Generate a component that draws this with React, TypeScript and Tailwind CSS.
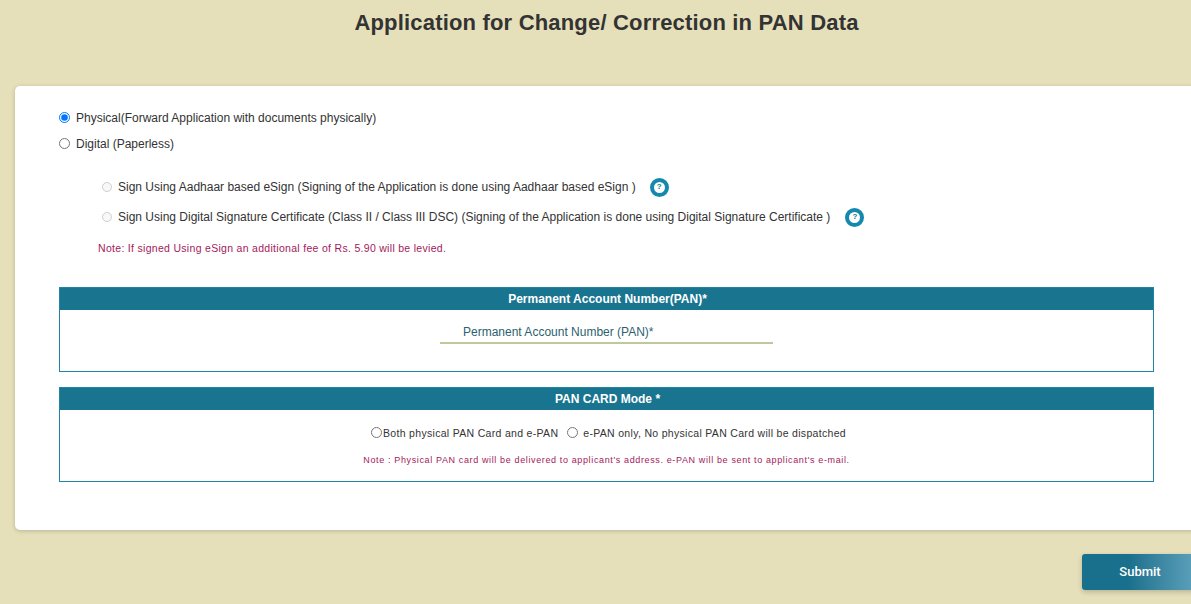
import { useState } from "react";

function HelpIcon({ className }: { className: string }) {
  return (
    <span className={`flex h-[19px] w-[19px] items-center justify-center rounded-full border-[4px] border-[#1489ad] bg-white text-[8px] font-bold leading-none text-[#17748f] ${className}`}>
      ?
    </span>
  );
}

function Section({ title, className, children }: { title: string; className: string; children: React.ReactNode }) {
  return (
    <div className={`p-[1px] shadow-[inset_0_0_0_1px_#1f84a6] ${className}`}>
      <div className="flex h-[22px] items-center justify-center bg-[#18748f] pl-[2px] text-[12px] font-bold text-white">
        {title}
      </div>
      {children}
    </div>
  );
}

export default function App() {
  const [mode, setMode] = useState("physical");
  const [cardMode, setCardMode] = useState("");

  return (
    <div className="h-[604px] w-[1191px] overflow-hidden bg-[#e5e0ba] font-['Liberation_Sans',Arial,sans-serif] text-[#333]">
      <div className="w-[1213px]">
        <h1 className="h-[86px] pt-[9px] text-center text-[22px] font-bold leading-[27px] tracking-[0.18px] text-[#333]">
          Application for Change/ Correction in PAN Data
        </h1>

        <div className="ml-[15px] mr-[15px] h-[444px] rounded-[5px] bg-white px-[44px] pt-[24px] shadow-[0_1px_4px_rgba(0,0,0,0.2)]">
          <label className="flex h-[15px] items-center text-[12px]">
            <input
              type="radio"
              name="mode"
              checked={mode === "physical"}
              onChange={() => setMode("physical")}
              className="m-0 mr-[6px] h-[11px] w-[11px]"
            />
            Physical(Forward Application with documents physically)
          </label>
          <label className="mt-[11px] flex h-[15px] items-center text-[12px]">
            <input
              type="radio"
              name="mode"
              checked={mode === "digital"}
              onChange={() => setMode("digital")}
              className="m-0 mr-[6px] h-[11px] w-[11px]"
            />
            Digital (Paperless)
          </label>

          <div className="ml-[43px] mt-[26px]">
            <div className="flex h-[20px] items-center text-[12px]">
              <input type="radio" disabled className="m-0 mr-[6px] h-[10px] w-[10px]" />
              Sign Using Aadhaar based eSign (Signing of the Application is done using Aadhaar based eSign )
              <HelpIcon className="ml-[14px]" />
            </div>
            <div className="mt-[10px] flex h-[20px] items-center text-[12px]">
              <input type="radio" disabled className="m-0 mr-[6px] h-[10px] w-[10px]" />
              Sign Using Digital Signature Certificate (Class II / Class III DSC) (Signing of the Application is done using Digital Signature Certificate )
              <HelpIcon className="ml-[15px]" />
            </div>
            <p className="ml-[-4px] mt-[15px] text-[10.5px] leading-[12px] tracking-[0.3px] text-[#a3195b]">
              Note: If signed Using eSign an additional fee of Rs. 5.90 will be levied.
            </p>
          </div>

          <Section title="Permanent Account Number(PAN)*" className="mt-[33px] h-[85px]">
            <div className="mx-auto mt-[10px] h-[24px] w-[333px] border-b-2 border-[#c0c89a] pl-[23px] text-[12px] leading-[24px] text-[#2c5f70]">
              Permanent Account Number (PAN)*
            </div>
          </Section>

          <Section title="PAN CARD Mode *" className="mt-[15px] h-[95px]">
            <div className="mt-[16px] flex h-[16px] items-center justify-center pl-[4px] text-[10.5px] tracking-[0.31px]">
              <input
                type="radio"
                name="card"
                checked={cardMode === "both"}
                onChange={() => setCardMode("both")}
                className="m-0 mb-[3px] mr-[1px] h-[11px] w-[11px]"
              />
              Both physical PAN Card and e-PAN
              <input
                type="radio"
                name="card"
                checked={cardMode === "epan"}
                onChange={() => setCardMode("epan")}
                className="m-0 mb-[3px] ml-[9px] mr-[5px] h-[11px] w-[11px]"
              />
              e-PAN only, No physical PAN Card will be dispatched
            </div>
            <p className="mt-[12px] text-center text-[9px] leading-[12px] tracking-[0.63px] text-[#a3195b]">
              Note : Physical PAN card will be delivered to applicant's address. e-PAN will be sent to applicant's e-mail.
            </p>
          </Section>
        </div>

        <div className="ml-[1082px] mt-[24px]">
          <button
            type="button"
            className="h-[36px] w-[116px] rounded-[3px] bg-gradient-to-r from-[#19708c] from-40% to-[#5ea3bd] font-['Roboto',sans-serif] text-[13px] font-medium text-white shadow-[0_2px_5px_rgba(0,0,0,0.2)]"
          >
            Submit
          </button>
        </div>
      </div>
    </div>
  );
}
